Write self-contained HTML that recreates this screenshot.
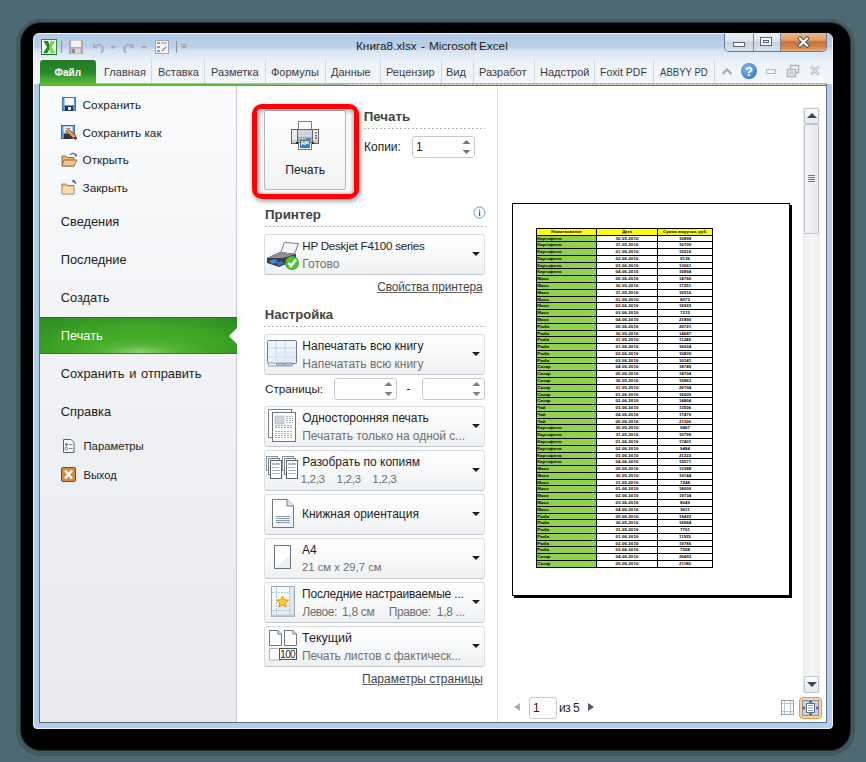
<!DOCTYPE html>
<html><head><meta charset="utf-8">
<style>
*{margin:0;padding:0;box-sizing:border-box}
html,body{width:866px;height:762px;overflow:hidden}
body{background:#4e6972;font-family:"Liberation Sans",sans-serif;position:relative;color:#222}
.a{position:absolute}
.t{position:absolute;white-space:nowrap;line-height:1}
</style></head><body>
<!-- shadow -->
<div class="a" style="left:16px;top:19px;width:839px;height:737px;border-radius:25px;background:rgba(0,0,0,.16)"></div>
<div class="a" style="left:20px;top:22px;width:831px;height:729px;border-radius:21px;background:rgba(0,0,0,.45)"></div>
<div class="a" style="left:21px;top:23px;width:829px;height:727px;border-radius:20px;background:#000"></div>
<!-- window frame -->
<div class="a" id="win" style="left:33px;top:33px;width:800px;height:696px;border-radius:6px 6px 4px 4px;background:#b3cde8;border:1px solid #e9f4ff"></div>
<!-- title bar gradient -->
<div class="a" style="left:34px;top:34px;width:798px;height:50px;border-radius:5px 5px 0 0;background:linear-gradient(#b3cbe7 0px,#b9cfe9 13px,#cddcef 15px,#d9e5f3 18px,#e4edf7 24px,#eef3fa 30px,#f4f7fb 50px)"></div>
<!-- content area border -->
<div class="a" style="left:39px;top:83px;width:788px;height:640px;background:#5e6d7d"></div>
<div class="a" style="left:39px;top:83px;width:788px;height:1px;background:#b0b4c0"></div>
<div class="a" style="left:40px;top:84px;width:786px;height:1px;background:#b8bcc2"></div>
<div class="a" style="left:350px;top:84px;width:476px;height:1px;background:repeating-linear-gradient(90deg,#eef0b8 0 2px,transparent 2px 4px)"></div>
<div class="a" style="left:40px;top:84px;width:320px;height:2px;background:linear-gradient(90deg,#58c02e 0,#58c02e 150px,rgba(88,192,46,.6) 230px,rgba(88,192,46,0) 320px)"></div>
<!-- left panel -->
<div class="a" style="left:40px;top:86px;width:196px;height:636px;background:linear-gradient(#fafbfc,#f0f1f4 50%,#e8eaed)"></div>
<div class="a" style="left:236px;top:86px;width:1px;height:636px;background:#c8ccd2"></div>
<!-- middle panel -->
<div class="a" style="left:237px;top:86px;width:260px;height:636px;background:#fff"></div>
<div class="a" style="left:497px;top:86px;width:1px;height:636px;background:#dcdfe3"></div>
<!-- preview panel -->
<div class="a" style="left:498px;top:86px;width:328px;height:636px;background:#fff"></div>

<!-- title -->
<div class="t" style="left:356px;top:40.6px;font-size:11.8px;color:#1a1a1a;word-spacing:-1.2px">Книга8.xlsx&nbsp; -&nbsp; Microsoft Excel</div>


<!-- quick access toolbar -->
<div class="a" style="left:41px;top:39px;width:16px;height:16px;border:1px solid #2a8a36;border-bottom-color:#1d6a28;background:linear-gradient(135deg,#fbfbe6,#eef6e6)"></div>
<svg class="a" style="left:41px;top:39px" width="16" height="16"><path d="M2.5 2 L7 2 L8.5 5.8 L10.2 2 L14 2 L10.4 8 L14.2 14 L9.8 14 L8.2 10.2 L6.4 14 L2.2 14 L6 8 Z" fill="#1a8a2a"/><path d="M10.2 2 L14 2 L10.4 8 L14.2 14 L9.8 14 L8.2 10.2 L8.5 5.8 Z" fill="#86d45e"/></svg>
<div class="a" style="left:61px;top:41px;width:1px;height:12px;background:#8a8f9a"></div>
<!-- save -->
<svg class="a" style="left:68px;top:39px" width="16" height="16"><rect x="1" y="1" width="14" height="14" fill="#a8a8b0"/><rect x="3" y="1.5" width="10" height="6.5" fill="#f2f3f5"/><rect x="3.5" y="9.5" width="9" height="5" fill="#d8d8dc"/><rect x="4" y="10" width="3" height="4" fill="#8a8a92"/></svg>
<!-- undo -->
<svg class="a" style="left:90px;top:39px" width="16" height="16"><path d="M3 4 L3 9 L8 9 L6.2 7.2 C8 5.8 11 6.5 11.5 9.5 C11.8 11 11 12.5 10 13.5 L12 14.5 C14 12.5 14.5 10 13.5 8 C12 4.5 8 3.8 5 5.9 Z" fill="#a9adb5"/></svg>
<div class="a" style="left:110px;top:46px;border-left:3px solid transparent;border-right:3px solid transparent;border-top:3px solid #a0a4ac;width:0;height:0"></div>
<!-- redo -->
<svg class="a" style="left:121px;top:39px" width="16" height="16"><path d="M13 4 L13 9 L8 9 L9.8 7.2 C8 5.8 5 6.5 4.5 9.5 C4.2 11 5 12.5 6 13.5 L4 14.5 C2 12.5 1.5 10 2.5 8 C4 4.5 8 3.8 11 5.9 Z" fill="#a9adb5"/></svg>
<div class="a" style="left:141px;top:46px;border-left:3px solid transparent;border-right:3px solid transparent;border-top:3px solid #a0a4ac;width:0;height:0"></div>
<!-- form icon -->
<svg class="a" style="left:154px;top:39px" width="16" height="16"><rect x="1.5" y="1.5" width="13" height="13" fill="#f4f4f6" stroke="#a4a6ae"/><rect x="3" y="3" width="3" height="2" fill="#9a9ca4"/><rect x="7" y="3" width="6" height="2" fill="#bfc1c8"/><rect x="3" y="7" width="3" height="2" fill="#9a9ca4"/><rect x="3" y="11" width="3" height="2" fill="#9a9ca4"/><path d="M8 12 L12 8" stroke="#8e9098" stroke-width="1.2"/></svg>
<div class="a" style="left:176px;top:41px;width:1px;height:12px;background:#8a8f9a"></div>
<div class="a" style="left:181px;top:44px;width:6px;height:1px;background:#a0a4ac"></div>
<div class="a" style="left:181px;top:46px;border-left:3px solid transparent;border-right:3px solid transparent;border-top:3px solid #a0a4ac;width:0;height:0"></div>

<!-- caption buttons -->
<div class="a" style="left:724px;top:33px;width:103px;height:19px;border:1px solid #6f7b89;border-top:none;border-radius:0 0 5px 5px;overflow:hidden">
 <div class="a" style="left:0;top:0;width:28px;height:18px;background:linear-gradient(#e8eff7,#dde6f0 45%,#c9d4e0 50%,#d8e2ec 100%)"></div>
 <div class="a" style="left:28px;top:0;width:1px;height:18px;background:#7c8896"></div>
 <div class="a" style="left:29px;top:0;width:26px;height:18px;background:linear-gradient(#e8eff7,#dde6f0 45%,#c9d4e0 50%,#d8e2ec 100%)"></div>
 <div class="a" style="left:55px;top:0;width:1px;height:18px;background:#7c8896"></div>
 <div class="a" style="left:56px;top:0;width:46px;height:18px;background:linear-gradient(#edb98e,#e29c66 40%,#c8703a 50%,#d0824c 75%,#e6aa7c)"></div>
</div>
<div class="a" style="left:733px;top:42px;width:12px;height:5px;background:#fff;border:1px solid #5d6470"></div>
<div class="a" style="left:760px;top:37px;width:12px;height:9px;background:#fff;border:1px solid #5d6470"></div>
<div class="a" style="left:763px;top:40px;width:6px;height:3px;border:1px solid #5d6470;background:#e8eef5"></div>
<svg class="a" style="left:797px;top:36px" width="13" height="12"><path d="M3 2.5 L10 9.5 M10 2.5 L3 9.5" stroke="#4a505c" stroke-width="4" stroke-linecap="square" fill="none"/><path d="M3 2.5 L10 9.5 M10 2.5 L3 9.5" stroke="#fff" stroke-width="2.2" stroke-linecap="square" fill="none"/></svg>

<!-- tabs -->
<div class="a" style="left:40px;top:60px;width:56px;height:24px;border-radius:3px 3px 0 0;background:linear-gradient(#237a25,#2b8a2c 55%,#48aa36 80%,#57b63c)"></div>
<div class="t" style="left:54.5px;top:68px;font-size:10px;font-weight:700;color:#fff">Файл</div>
<div class="t" style="left:104px;top:67px;font-size:11px;color:#3c3c3c">Главная</div>
<div class="a" style="left:151px;top:60px;width:1px;height:23px;background:#d4d8de"></div>
<div class="t" style="left:158px;top:67px;font-size:11px;color:#3c3c3c">Вставка</div>
<div class="a" style="left:204px;top:60px;width:1px;height:23px;background:#d4d8de"></div>
<div class="t" style="left:211px;top:67px;font-size:11px;color:#3c3c3c">Разметка</div>
<div class="a" style="left:265px;top:60px;width:1px;height:23px;background:#d4d8de"></div>
<div class="t" style="left:271px;top:67px;font-size:11px;color:#3c3c3c">Формулы</div>
<div class="a" style="left:325px;top:60px;width:1px;height:23px;background:#d4d8de"></div>
<div class="t" style="left:331px;top:67px;font-size:11px;color:#3c3c3c">Данные</div>
<div class="a" style="left:380px;top:60px;width:1px;height:23px;background:#d4d8de"></div>
<div class="t" style="left:386px;top:67px;font-size:11px;color:#3c3c3c;width:49px;overflow:hidden">Рецензирование</div>
<div class="a" style="left:441px;top:60px;width:1px;height:23px;background:#d4d8de"></div>
<div class="t" style="left:446px;top:67px;font-size:11px;color:#3c3c3c">Вид</div>
<div class="a" style="left:473px;top:60px;width:1px;height:23px;background:#d4d8de"></div>
<div class="t" style="left:479px;top:67px;font-size:11px;color:#3c3c3c;width:48px;overflow:hidden">Разработчик</div>
<div class="a" style="left:534px;top:60px;width:1px;height:23px;background:#d4d8de"></div>
<div class="t" style="left:540px;top:67px;font-size:11px;color:#3c3c3c;width:49px;overflow:hidden">Надстройки</div>
<div class="a" style="left:594px;top:60px;width:1px;height:23px;background:#d4d8de"></div>
<div class="t" style="left:600px;top:67px;font-size:11px;color:#3c3c3c;transform:scaleX(.96);transform-origin:0 0">Foxit PDF</div>
<div class="a" style="left:653px;top:60px;width:1px;height:23px;background:#d4d8de"></div>
<div class="t" style="left:660px;top:67px;font-size:11px;color:#3c3c3c;transform:scaleX(.87);transform-origin:0 0">ABBYY PD</div>
<div class="a" style="left:714px;top:60px;width:1px;height:23px;background:#d4d8de"></div>
<!-- ribbon right icons -->
<svg class="a" style="left:721px;top:67px" width="12" height="9"><path d="M1.5 7 L6 2.5 L10.5 7" stroke="#a4a8b0" stroke-width="2" fill="none"/></svg>
<div class="a" style="left:741px;top:63px;width:16px;height:16px;border-radius:50%;background:radial-gradient(circle at 40% 35%,#8fb9ec,#3f7fd0 70%,#2f66b8)"></div>
<div class="t" style="left:745px;top:65px;font-size:13px;font-weight:700;color:#fff">?</div>
<div class="a" style="left:766px;top:69px;width:10px;height:5px;border:1.5px solid #b0b4bc;border-radius:1px"></div>
<svg class="a" style="left:786px;top:64px" width="14" height="14"><rect x="4.5" y="1.5" width="8" height="7" fill="none" stroke="#b0b4bc" stroke-width="1.5"/><rect x="1.5" y="5.5" width="8" height="7" fill="#f4f7fb" stroke="#b0b4bc" stroke-width="1.5"/><rect x="4" y="8" width="3" height="2" fill="none" stroke="#b0b4bc"/></svg>
<svg class="a" style="left:809px;top:65px" width="12" height="11"><path d="M2 1.5 L6 5 L10 1.5 M2 9.5 L6 6 L10 9.5" stroke="#b0b4bc" stroke-width="2.6" fill="none"/><path d="M2 1.5 L6 5 L10 1.5 M2 9.5 L6 6 L10 9.5" stroke="#f4f7fb" stroke-width="1" fill="none"/></svg>

<div class="t" style="left:82.50px;top:99.71px;font-size:11.8px;font-weight:400;color:#222;">Сохранить</div>
<div class="t" style="left:82.50px;top:127.71px;font-size:11.8px;font-weight:400;color:#222;">Сохранить как</div>
<div class="t" style="left:82.50px;top:155.21px;font-size:11.8px;font-weight:400;color:#222;">Открыть</div>
<div class="t" style="left:82.50px;top:183.21px;font-size:11.8px;font-weight:400;color:#222;">Закрыть</div>
<div class="t" style="left:60.80px;top:216.16px;font-size:12.8px;font-weight:400;color:#222;">Сведения</div>
<div class="t" style="left:60.80px;top:254.06px;font-size:12.8px;font-weight:400;color:#222;">Последние</div>
<div class="t" style="left:60.80px;top:292.36px;font-size:12.8px;font-weight:400;color:#222;">Создать</div>
<div class="a" style="left:40px;top:317px;width:197px;height:37px;background:radial-gradient(ellipse 70px 14px at 100px 35px,rgba(170,225,140,.75) 0%,rgba(120,200,90,.35) 50%,rgba(80,180,50,0) 100%),radial-gradient(ellipse 140px 40px at 100px 30px,#4cb22e 0%,#3fa526 55%,#2b8c22 100%);border-top:1px solid #217a1f;border-bottom:1px solid #2a8424"></div>
<svg class="a" style="left:229px;top:328px" width="8" height="16"><path d="M8 0 L0 8 L8 16 Z" fill="#fff"/></svg>
<div class="t" style="left:60.80px;top:330.06px;font-size:12.8px;font-weight:400;color:#fff;">Печать</div>
<div class="t" style="left:60.80px;top:368.36px;font-size:12.8px;font-weight:400;color:#222;word-spacing:1.2px">Сохранить и отправить</div>
<div class="t" style="left:60.80px;top:405.86px;font-size:12.8px;font-weight:400;color:#222;">Справка</div>
<div class="t" style="left:83.50px;top:441.43px;font-size:11.3px;font-weight:400;color:#222;">Параметры</div>
<div class="t" style="left:83.50px;top:469.60px;font-size:11.1px;font-weight:400;color:#222;">Выход</div>
<svg class="a" style="left:61px;top:96px" width="16" height="16">
<rect x="1" y="1" width="14" height="14" rx="1" fill="#5a9be6"/><rect x="1.5" y="1.5" width="13" height="13" fill="none" stroke="#3d6fb8"/>
<rect x="3.5" y="2" width="9.5" height="7" fill="#f6f8fb"/><rect x="4" y="10" width="8" height="5" fill="#2c3448"/><rect x="7" y="11" width="3" height="3" fill="#e8ecf2"/></svg>
<svg class="a" style="left:60px;top:124px" width="18" height="16">
<rect x="1" y="1" width="14" height="14" rx="1" fill="#5a9be6"/><rect x="1.5" y="1.5" width="13" height="13" fill="none" stroke="#3d6fb8"/>
<rect x="3.5" y="2.5" width="9" height="6" fill="#f6f8fb"/><rect x="4" y="10" width="8" height="5" fill="#2c3448"/><path d="M5 4.5 H11 M5 6.5 H9" stroke="#8a94a4" stroke-width=".8"/>
<path d="M7 6 L15 13.5" stroke="#6b3a14" stroke-width="4"/><path d="M7 6 L15 13.5" stroke="#f0a24a" stroke-width="2.6"/><circle cx="15.5" cy="14" r="1.6" fill="#8a2020"/></svg>
<svg class="a" style="left:61px;top:152px" width="17" height="16">
<path d="M1 4 L5 4 L6.5 5.5 L13 5.5 L13 14 L1 14 Z" fill="#e7b47a" stroke="#7a5a3a" stroke-width="0.8"/>
<path d="M3 8 L16 8 L13 14 L1 14 Z" fill="#f2c48c" stroke="#7a5a3a" stroke-width="0.8"/>
<path d="M9 3 C11 0.5 14 1 15 3.5" stroke="#4a5a7a" stroke-width="1.1" fill="none"/><path d="M13.5 4 L16 4.5 L15.5 1.8 Z" fill="#2a5ab0"/></svg>
<svg class="a" style="left:61px;top:179px" width="17" height="16">
<path d="M1 5 L5 5 L6.5 6.5 L13 6.5 L13 15 L1 15 Z" fill="#f0c88e" stroke="#7a5a3a" stroke-width="0.8"/>
<path d="M1.5 8 L12.5 8 L12.5 14.5 L1.5 14.5 Z" fill="#f6dba8"/>
<path d="M12 1.5 L15 4.5" stroke="#4a5060" stroke-width="1.2"/><path d="M11.5 1 L14 1 L11.5 3.5 Z" fill="#2a4ea0"/></svg>
<svg class="a" style="left:62px;top:438px" width="14" height="16">
<path d="M1.5 1.5 L9 1.5 L12 4.5 L12 14.5 L1.5 14.5 Z" fill="#fbfbfc" stroke="#5a6070"/>
<circle cx="4.5" cy="6.5" r="1.3" fill="#58607a"/><circle cx="4.5" cy="10.5" r="1.3" fill="none" stroke="#58607a" stroke-width="0.8"/>
<rect x="7" y="6" width="3.5" height="1" fill="#7a8499"/><rect x="7" y="10" width="3.5" height="1" fill="#7a8499"/></svg>
<svg class="a" style="left:61px;top:467px" width="15" height="15">
<rect x="0.5" y="0.5" width="14" height="14" rx="1.5" fill="#d78a3a" stroke="#6a4a40"/>
<path d="M4 3.5 L11 11.5 M11 3.5 L4 11.5" stroke="#fff" stroke-width="2.6"/></svg>
<div class="a" style="left:252px;top:104px;width:107px;height:95px;border:5px solid #ff0000;border-radius:10px;background:#fff;box-shadow:1px 2px 4px 1px rgba(70,90,100,.45)"></div>
<div class="a" style="left:257px;top:109px;width:97px;height:85px;border-radius:4px;background:#fafafa;box-shadow:inset 2px 2px 4px rgba(90,100,105,.5),inset -2px -1px 3px rgba(90,100,105,.3)"></div>
<div class="a" style="left:264px;top:110px;width:82px;height:80px;border:1px solid #b4b8bd;border-top-color:#9a9ca8;border-radius:3px;background:linear-gradient(#fdfdfd,#f8f8f9 60%,#f1f2f3)"></div>
<svg class="a" style="left:289px;top:119px" width="32" height="32">
<rect x="9.5" y="2.5" width="13" height="8" fill="#fff" stroke="#7a8084"/>
<rect x="2.5" y="10.5" width="27" height="14" fill="#eceef0" stroke="#6a6070"/>
<rect x="8.5" y="10.5" width="15" height="14" fill="#cfd0d4" stroke="#6a6070"/>
<path d="M10 13.5 H22 M10 16.5 H22" stroke="#e6e7ea" stroke-dasharray="1 1"/>
<rect x="9" y="18" width="14" height="5" fill="#aab2ae"/><rect x="17" y="19" width="5" height="2" fill="#4a8ad8"/>
<rect x="3" y="21" width="5" height="3" fill="#c8cacc"/><rect x="24" y="21" width="5" height="3" fill="#c8cacc"/>
<rect x="7" y="23" width="2" height="2" fill="#2a2a30"/><rect x="23" y="23" width="2" height="2" fill="#2a2a30"/>
<rect x="9.5" y="23.5" width="13" height="7" fill="#fff" stroke="#6f7478"/>
<rect x="11.5" y="21.5" width="9" height="7" fill="#b4e2f6" stroke="#5a6a7a"/><path d="M12 27 L14 25 L16 26.5 L18 24.5 L20 26 L20 28 L12 28 Z" fill="#3a7ad0"/><rect x="14" y="22" width="2" height="1.5" fill="#f0a020"/>
<rect x="26" y="13" width="2" height="1.5" fill="#6a707a"/><rect x="26" y="16" width="2" height="1.5" fill="#6a707a"/><rect x="26" y="18.5" width="2" height="1.5" fill="#7a5060"/></svg>
<div class="t" style="left:285.30px;top:163.97px;font-size:12.2px;font-weight:400;color:#222;">Печать</div>
<div class="t" style="left:363.70px;top:109.54px;font-size:13.3px;font-weight:700;color:#444;">Печать</div>
<div class="a" style="left:364px;top:128px;width:121px;height:1px;background:repeating-linear-gradient(90deg,#b4b4b4 0 2px,transparent 2px 4px)"></div>
<div class="t" style="left:364.00px;top:140.64px;font-size:12px;font-weight:400;color:#222;">Копии:</div>
<div class="a" style="left:412px;top:136px;width:63px;height:22px;border:1px solid #c6cacf;border-radius:3px;background:#fff"></div>
<div class="t" style="left:416.00px;top:140.64px;font-size:12px;font-weight:400;color:#222;">1</div>
<svg class="a" style="left:462px;top:139px" width="9" height="16"><path d="M0.5 5 L4.5 1 L8.5 5 Z M0.5 11 L4.5 15 L8.5 11 Z" fill="#707480"/></svg>
<div class="t" style="left:265.00px;top:207.94px;font-size:13.3px;font-weight:700;color:#444;">Принтер</div>
<div class="a" style="left:265px;top:226px;width:221px;height:1px;background:repeating-linear-gradient(90deg,#b4b4b4 0 2px,transparent 2px 4px)"></div>
<svg class="a" style="left:473px;top:206px" width="13" height="13"><circle cx="6.5" cy="6.5" r="5.5" fill="#fff" stroke="#5b9be0" stroke-width="1"/><rect x="6" y="3.5" width="1.2" height="1.2" fill="#50505a"/><rect x="6" y="5.5" width="1.2" height="4.5" fill="#50505a"/></svg>
<div class="a" style="left:264px;top:234px;width:221px;height:41px;border:1px solid #dadde1;border-bottom-color:#c4c8cd;border-radius:3px;background:linear-gradient(#fefefe,#f7f8f9 55%,#eff0f2)"></div>
<div class="a" style="left:472px;top:252px;border-left:4px solid transparent;border-right:4px solid transparent;border-top:4px solid #202020;width:0;height:0"></div>
<svg class="a" style="left:266px;top:241px" width="34" height="30">
<path d="M18.5 1.5 L32.5 2.5 L28.5 13 L14.5 12 Z" fill="#f2f3f4" stroke="#7a7e86" stroke-width="1"/>
<path d="M1 17 L14 11 L30 13 L30 19 L13 26 L1 22 Z" fill="#3c3e44"/>
<path d="M1 17 L14 11 L30 13 L17 17 Z" fill="#8a8e96"/>
<path d="M3 20 L9 18 L12 21 L6 23 Z" fill="#3a8ae0"/><path d="M10 22 L16 20 L18 23 L12 25 Z" fill="#2a72d0"/>
<circle cx="26" cy="22" r="7" fill="#3fae2a"/><circle cx="26" cy="22" r="6" fill="#52c236"/>
<path d="M22.5 22 L25 25 L30 18.5" stroke="#fff" stroke-width="2.4" fill="none"/></svg>
<div class="t" style="left:302.30px;top:240.38px;font-size:11.6px;font-weight:400;color:#1e1e1e;letter-spacing:-0.25px">HP Deskjet F4100 series</div>
<div class="t" style="left:302.30px;top:258.04px;font-size:12px;font-weight:400;color:#707070;">Готово</div>
<div class="t" style="left:377.20px;top:281.14px;font-size:12px;font-weight:400;color:#444;text-decoration:underline;text-decoration-color:#666;letter-spacing:-0.15px">Свойства принтера</div>
<div class="t" style="left:264.80px;top:307.61px;font-size:13.1px;font-weight:700;color:#444;">Настройка</div>
<div class="a" style="left:264px;top:326px;width:221px;height:1px;background:repeating-linear-gradient(90deg,#b4b4b4 0 2px,transparent 2px 4px)"></div>
<div class="a" style="left:264px;top:334px;width:221px;height:41px;border:1px solid #dadde1;border-bottom-color:#c4c8cd;border-radius:3px;background:linear-gradient(#fefefe,#f7f8f9 55%,#eff0f2)"></div>
<div class="a" style="left:472px;top:352px;border-left:4px solid transparent;border-right:4px solid transparent;border-top:4px solid #202020;width:0;height:0"></div>
<svg class="a" style="left:266px;top:339px" width="32" height="28">
<rect x="1.5" y="1.5" width="29" height="23" rx="1" fill="#eef4fb" stroke="#6f7a84"/>
<path d="M10 2 V24 M19 2 V24 M2 9 H30 M2 18 H30" stroke="#c8d6e6" stroke-width="1"/>
<path d="M2 24 L14 12 L30 12 L30 24 Z" fill="#dbe8f6" opacity=".6"/>
<rect x="2.5" y="24" width="8" height="3" rx="1" fill="#fff" stroke="#7a8490" stroke-width=".8"/>
<rect x="10.5" y="24" width="8" height="3" rx="1" fill="#a8c4e4" stroke="#7a8490" stroke-width=".8"/>
<rect x="18.5" y="24" width="8" height="3" rx="1" fill="#a8c4e4" stroke="#7a8490" stroke-width=".8"/></svg>
<div class="t" style="left:302.30px;top:339.84px;font-size:12px;font-weight:400;color:#1e1e1e;">Напечатать всю книгу</div>
<div class="t" style="left:302.30px;top:357.84px;font-size:12px;font-weight:400;color:#707070;">Напечатать всю книгу</div>
<div class="t" style="left:265.00px;top:382.90px;font-size:11.7px;font-weight:400;color:#222;">Страницы:</div>
<div class="a" style="left:334px;top:378px;width:63px;height:22px;border:1px solid #c6cacf;border-radius:3px;background:#fff"></div>
<svg class="a" style="left:384px;top:381px" width="9" height="16"><path d="M0.5 5 L4.5 1 L8.5 5 Z M0.5 11 L4.5 15 L8.5 11 Z" fill="#7e7c8a"/></svg>
<div class="t" style="left:406.50px;top:382.64px;font-size:12px;font-weight:400;color:#222;">-</div>
<div class="a" style="left:422px;top:378px;width:63px;height:22px;border:1px solid #c6cacf;border-radius:3px;background:#fff"></div>
<svg class="a" style="left:472px;top:381px" width="9" height="16"><path d="M0.5 5 L4.5 1 L8.5 5 Z M0.5 11 L4.5 15 L8.5 11 Z" fill="#7e7c8a"/></svg>
<div class="a" style="left:264px;top:406px;width:221px;height:41px;border:1px solid #dadde1;border-bottom-color:#c4c8cd;border-radius:3px;background:linear-gradient(#fefefe,#f7f8f9 55%,#eff0f2)"></div>
<div class="a" style="left:472px;top:424px;border-left:4px solid transparent;border-right:4px solid transparent;border-top:4px solid #202020;width:0;height:0"></div>
<svg class="a" style="left:267px;top:409px" width="30" height="34">
<rect x="1.5" y="0.5" width="23" height="28" fill="#fff" stroke="#7a8488"/>
<rect x="5.5" y="3.5" width="23" height="29" fill="#fff" stroke="#6a747c"/>
<rect x="8" y="7" width="9" height="8" fill="#d0d4d8" stroke="#a8aeb4" stroke-width=".6"/>
<path d="M19 7.5 H26 M19 9.5 H26 M19 11.5 H26 M19 13.5 H26 M8 16.5 H26 M8 18.5 H26 M8 22.5 H26 M8 24.5 H26 M8 26.5 H26 M8 28.5 H26" stroke="#a4b0bc" stroke-width="1" stroke-dasharray="2 1"/></svg>
<div class="t" style="left:302.30px;top:411.84px;font-size:12px;font-weight:400;color:#1e1e1e;letter-spacing:-0.05px">Односторонняя печать</div>
<div class="t" style="left:302.30px;top:429.84px;font-size:12px;font-weight:400;color:#707070;letter-spacing:-0.05px">Печатать только на одной с...</div>
<div class="a" style="left:264px;top:450px;width:221px;height:41px;border:1px solid #dadde1;border-bottom-color:#c4c8cd;border-radius:3px;background:linear-gradient(#fefefe,#f7f8f9 55%,#eff0f2)"></div>
<div class="a" style="left:472px;top:468px;border-left:4px solid transparent;border-right:4px solid transparent;border-top:4px solid #202020;width:0;height:0"></div>
<svg class="a" style="left:266px;top:456px" width="34" height="24">
<g><rect x="0.5" y="0.5" width="11" height="14" fill="#fff" stroke="#8a9498"/>
<rect x="2.5" y="2.5" width="11" height="16" fill="#fff" stroke="#7a8488"/>
<rect x="4.5" y="4.5" width="11" height="18" fill="#fff" stroke="#5a646c"/>
<rect x="6" y="7" width="8" height="2" fill="#b4bcc4"/><path d="M6 11.5 H13 M6 14.5 H14 M6 17.5 H14" stroke="#a8b0b8"/></g><g transform="translate(16 0)"><rect x="0.5" y="0.5" width="11" height="14" fill="#fff" stroke="#8a9498"/>
<rect x="2.5" y="2.5" width="11" height="16" fill="#fff" stroke="#7a8488"/>
<rect x="4.5" y="4.5" width="11" height="18" fill="#fff" stroke="#5a646c"/>
<rect x="6" y="7" width="8" height="2" fill="#b4bcc4"/><path d="M6 11.5 H13 M6 14.5 H14 M6 17.5 H14" stroke="#a8b0b8"/></g></svg>
<div class="t" style="left:302.30px;top:455.84px;font-size:12px;font-weight:400;color:#1e1e1e;">Разобрать по копиям</div>
<div class="t" style="left:300.50px;top:474.01px;font-size:11.8px;font-weight:400;color:#707070;letter-spacing:-0.4px">1,2,3</div>
<div class="t" style="left:336.50px;top:474.01px;font-size:11.8px;font-weight:400;color:#707070;letter-spacing:-0.4px">1,2,3</div>
<div class="t" style="left:372.30px;top:474.01px;font-size:11.8px;font-weight:400;color:#707070;letter-spacing:-0.4px">1,2,3</div>
<div class="a" style="left:264px;top:494px;width:221px;height:41px;border:1px solid #dadde1;border-bottom-color:#c4c8cd;border-radius:3px;background:linear-gradient(#fefefe,#f7f8f9 55%,#eff0f2)"></div>
<div class="a" style="left:472px;top:512px;border-left:4px solid transparent;border-right:4px solid transparent;border-top:4px solid #202020;width:0;height:0"></div>
<svg class="a" style="left:272px;top:499px" width="23" height="30">
<path d="M0.5 0.5 L15 0.5 L21.5 7 L21.5 28.5 L0.5 28.5 Z" fill="#fff" stroke="#6f7880"/>
<path d="M15 0.5 L15 7 L21.5 7" fill="#dfe8f4" stroke="#6f7880"/>
<path d="M1 28 L21 10 L21 28 Z" fill="#e8f1fa" opacity=".7"/>
<path d="M4 17.5 H18 M4 19.5 H18 M4 21.5 H18 M4 23.5 H18" stroke="#8a98a8" stroke-width="1"/></svg>
<div class="t" style="left:302.00px;top:508.34px;font-size:12px;font-weight:400;color:#1e1e1e;">Книжная ориентация</div>
<div class="a" style="left:264px;top:538px;width:221px;height:41px;border:1px solid #dadde1;border-bottom-color:#c4c8cd;border-radius:3px;background:linear-gradient(#fefefe,#f7f8f9 55%,#eff0f2)"></div>
<div class="a" style="left:472px;top:556px;border-left:4px solid transparent;border-right:4px solid transparent;border-top:4px solid #202020;width:0;height:0"></div>
<svg class="a" style="left:273px;top:544px" width="19" height="26">
<rect x="1.5" y="1.5" width="16" height="23" fill="#fff" stroke="#6f7880"/>
<path d="M2 24 L17 11 L17 24 Z" fill="#e6eff9"/></svg>
<div class="t" style="left:302.00px;top:543.84px;font-size:12px;font-weight:400;color:#1e1e1e;">A4</div>
<div class="t" style="left:302.00px;top:562.43px;font-size:11.3px;font-weight:400;color:#707070;">21 см x 29,7 см</div>
<div class="a" style="left:264px;top:582px;width:221px;height:41px;border:1px solid #dadde1;border-bottom-color:#c4c8cd;border-radius:3px;background:linear-gradient(#fefefe,#f7f8f9 55%,#eff0f2)"></div>
<div class="a" style="left:472px;top:600px;border-left:4px solid transparent;border-right:4px solid transparent;border-top:4px solid #202020;width:0;height:0"></div>
<svg class="a" style="left:270px;top:586px" width="26" height="32">
<rect x="1.5" y="0.5" width="23" height="30" fill="#f8fbfe" stroke="#9aa6b0"/>
<path d="M2 25 L24 8 L24 30 L2 30 Z" fill="#e4eef8"/>
<path d="M6.5 1 V30 M19.5 1 V30 M2 6.5 H24 M2 24.5 H24" stroke="#b4c6dc" stroke-width="1" stroke-dasharray="2 1"/><rect x="20" y="1" width="4" height="29" fill="#dde2e8" opacity=".7"/>
<rect x="1.5" y="28.5" width="23" height="2" fill="#c8ccd0"/>
<path d="M12.5 10 L14.3 13.8 L18.5 14.2 L15.3 16.9 L16.3 21 L12.5 18.8 L8.7 21 L9.7 16.9 L6.5 14.2 L10.7 13.8 Z" fill="#ffd21a" stroke="#e08a2a" stroke-width="1"/></svg>
<div class="t" style="left:302.00px;top:587.84px;font-size:12px;font-weight:400;color:#1e1e1e;letter-spacing:-0.17px">Последние настраиваемые ...</div>
<div class="t" style="left:302.30px;top:605.84px;font-size:12px;font-weight:400;color:#707070;letter-spacing:-0.5px">Левое:</div>
<div class="t" style="left:342.00px;top:605.84px;font-size:12px;font-weight:400;color:#707070;letter-spacing:-0.3px">1,8 см</div>
<div class="t" style="left:388.80px;top:605.84px;font-size:12px;font-weight:400;color:#707070;letter-spacing:-0.45px">Правое:</div>
<div class="t" style="left:436.80px;top:605.84px;font-size:12px;font-weight:400;color:#707070;letter-spacing:-0.3px">1,8 ...</div>
<div class="a" style="left:264px;top:626px;width:221px;height:41px;border:1px solid #dadde1;border-bottom-color:#c4c8cd;border-radius:3px;background:linear-gradient(#fefefe,#f7f8f9 55%,#eff0f2)"></div>
<div class="a" style="left:472px;top:644px;border-left:4px solid transparent;border-right:4px solid transparent;border-top:4px solid #202020;width:0;height:0"></div>
<svg class="a" style="left:268px;top:629px" width="31" height="32">
<path d="M1.5 1.5 L10 1.5 L13.5 5 L13.5 16.5 L1.5 16.5 Z" fill="#fff" stroke="#6f7880"/><path d="M10 1.5 V5 H13.5" fill="#e4ecf4" stroke="#6f7880"/>
<path d="M16.5 1.5 L25 1.5 L28.5 5 L28.5 16.5 L16.5 16.5 Z" fill="#fff" stroke="#6f7880"/><path d="M25 1.5 V5 H28.5" fill="#e4ecf4" stroke="#6f7880"/>
<path d="M1.5 19.5 L10 19.5 L13.5 23 L13.5 31 L1.5 31 Z" fill="#fff" stroke="#aab0b6"/>
<rect x="11.5" y="19.5" width="17" height="11" fill="#fff" stroke="#4a545c"/></svg>
<div class="t" style="left:280.30px;top:650.13px;font-size:10px;font-weight:400;color:#222;letter-spacing:-0.7px">100</div>
<div class="t" style="left:302.00px;top:631.82px;font-size:12.5px;font-weight:400;color:#1e1e1e;">Текущий</div>
<div class="t" style="left:302.00px;top:649.84px;font-size:12px;font-weight:400;color:#707070;letter-spacing:-0.1px">Печать листов с фактическ...</div>
<div class="t" style="left:362.00px;top:672.84px;font-size:12px;font-weight:400;color:#444;text-decoration:underline;text-decoration-color:#666">Параметры страницы</div>
<div class="a" style="left:803px;top:107px;width:17px;height:586px;background:linear-gradient(90deg,#eceef1,#f6f7f8 50%,#eceef1);border-left:1px solid #e6e8eb"></div>
<div class="a" style="left:804px;top:108px;width:15px;height:16px;border:1px solid #c2c6cc;border-radius:2px;background:linear-gradient(#fbfbfc,#e6e8eb)"></div>
<div class="a" style="left:807px;top:113px;border-left:5px solid transparent;border-right:5px solid transparent;border-bottom:5px solid #3c4a60;width:0;height:0"></div>
<div class="a" style="left:804px;top:124px;width:15px;height:110px;border:1px solid #c2c6cc;border-radius:2px;background:linear-gradient(90deg,#f5f6f8,#e6e8ec)"></div>
<div class="a" style="left:808px;top:175px;width:7px;height:1px;background:#707a88"></div>
<div class="a" style="left:808px;top:177px;width:7px;height:1px;background:#707a88"></div>
<div class="a" style="left:808px;top:179px;width:7px;height:1px;background:#707a88"></div>
<div class="a" style="left:808px;top:181px;width:7px;height:1px;background:#707a88"></div>
<div class="a" style="left:804px;top:676px;width:15px;height:17px;border:1px solid #c2c6cc;border-radius:2px;background:linear-gradient(#fbfbfc,#e6e8eb)"></div>
<div class="a" style="left:807px;top:682px;border-left:5px solid transparent;border-right:5px solid transparent;border-top:5px solid #3c4a60;width:0;height:0"></div>
<div class="a" style="left:514px;top:205px;width:278px;height:393px;background:#000"></div>
<div class="a" style="left:512px;top:203px;width:278px;height:393px;background:#fff;border:1px solid #000"></div>
<div class="a" style="left:536px;top:228px;width:177px;height:340px;background:#000"></div>
<div class="a" style="left:537px;top:229px;width:59px;height:6px;background:#ffff00"></div>
<div class="a" style="left:597px;top:229px;width:60px;height:6px;background:#ffff00"></div>
<div class="a" style="left:658px;top:229px;width:54px;height:6px;background:#ffff00"></div>
<div class="t" style="left:537px;top:229.8px;width:59px;text-align:center;font-size:4.2px;font-weight:700;color:#000">Наименование</div>
<div class="t" style="left:597px;top:229.8px;width:60px;text-align:center;font-size:4.2px;font-weight:700;color:#000">Дата</div>
<div class="t" style="left:658px;top:229.8px;width:54px;text-align:center;font-size:4.2px;font-weight:700;color:#000">Сумма выручки, руб.</div>
<div class="a" style="left:537px;top:236px;width:59px;height:5px;background:#92d050"></div>
<div class="a" style="left:597px;top:236px;width:60px;height:5px;background:#fff"></div>
<div class="a" style="left:658px;top:236px;width:54px;height:5px;background:#fff"></div>
<div class="t" style="left:537.3px;top:237.1px;font-size:4.4px;font-weight:700;color:#000">Картофель</div>
<div class="t" style="left:597px;top:237.1px;width:60px;text-align:center;font-size:4.4px;font-weight:700;color:#000;letter-spacing:.1px">30.05.2010</div>
<div class="t" style="left:658px;top:237.1px;width:54px;text-align:center;font-size:4.4px;font-weight:700;color:#000">10898</div>
<div class="a" style="left:537px;top:242px;width:59px;height:6px;background:#92d050"></div>
<div class="a" style="left:597px;top:242px;width:60px;height:6px;background:#fff"></div>
<div class="a" style="left:658px;top:242px;width:54px;height:6px;background:#fff"></div>
<div class="t" style="left:537.3px;top:243.1px;font-size:4.4px;font-weight:700;color:#000">Картофель</div>
<div class="t" style="left:597px;top:243.1px;width:60px;text-align:center;font-size:4.4px;font-weight:700;color:#000;letter-spacing:.1px">31.05.2010</div>
<div class="t" style="left:658px;top:243.1px;width:54px;text-align:center;font-size:4.4px;font-weight:700;color:#000">16709</div>
<div class="a" style="left:537px;top:249px;width:59px;height:6px;background:#92d050"></div>
<div class="a" style="left:597px;top:249px;width:60px;height:6px;background:#fff"></div>
<div class="a" style="left:658px;top:249px;width:54px;height:6px;background:#fff"></div>
<div class="t" style="left:537.3px;top:250.1px;font-size:4.4px;font-weight:700;color:#000">Картофель</div>
<div class="t" style="left:597px;top:250.1px;width:60px;text-align:center;font-size:4.4px;font-weight:700;color:#000;letter-spacing:.1px">01.06.2010</div>
<div class="t" style="left:658px;top:250.1px;width:54px;text-align:center;font-size:4.4px;font-weight:700;color:#000">15916</div>
<div class="a" style="left:537px;top:256px;width:59px;height:6px;background:#92d050"></div>
<div class="a" style="left:597px;top:256px;width:60px;height:6px;background:#fff"></div>
<div class="a" style="left:658px;top:256px;width:54px;height:6px;background:#fff"></div>
<div class="t" style="left:537.3px;top:257.1px;font-size:4.4px;font-weight:700;color:#000">Картофель</div>
<div class="t" style="left:597px;top:257.1px;width:60px;text-align:center;font-size:4.4px;font-weight:700;color:#000;letter-spacing:.1px">02.06.2010</div>
<div class="t" style="left:658px;top:257.1px;width:54px;text-align:center;font-size:4.4px;font-weight:700;color:#000">9136</div>
<div class="a" style="left:537px;top:263px;width:59px;height:5px;background:#92d050"></div>
<div class="a" style="left:597px;top:263px;width:60px;height:5px;background:#fff"></div>
<div class="a" style="left:658px;top:263px;width:54px;height:5px;background:#fff"></div>
<div class="t" style="left:537.3px;top:264.1px;font-size:4.4px;font-weight:700;color:#000">Картофель</div>
<div class="t" style="left:597px;top:264.1px;width:60px;text-align:center;font-size:4.4px;font-weight:700;color:#000;letter-spacing:.1px">03.06.2010</div>
<div class="t" style="left:658px;top:264.1px;width:54px;text-align:center;font-size:4.4px;font-weight:700;color:#000">13061</div>
<div class="a" style="left:537px;top:269px;width:59px;height:6px;background:#92d050"></div>
<div class="a" style="left:597px;top:269px;width:60px;height:6px;background:#fff"></div>
<div class="a" style="left:658px;top:269px;width:54px;height:6px;background:#fff"></div>
<div class="t" style="left:537.3px;top:270.1px;font-size:4.4px;font-weight:700;color:#000">Картофель</div>
<div class="t" style="left:597px;top:270.1px;width:60px;text-align:center;font-size:4.4px;font-weight:700;color:#000;letter-spacing:.1px">04.06.2010</div>
<div class="t" style="left:658px;top:270.1px;width:54px;text-align:center;font-size:4.4px;font-weight:700;color:#000">16894</div>
<div class="a" style="left:537px;top:276px;width:59px;height:6px;background:#92d050"></div>
<div class="a" style="left:597px;top:276px;width:60px;height:6px;background:#fff"></div>
<div class="a" style="left:658px;top:276px;width:54px;height:6px;background:#fff"></div>
<div class="t" style="left:537.3px;top:277.1px;font-size:4.4px;font-weight:700;color:#000">Мясо</div>
<div class="t" style="left:597px;top:277.1px;width:60px;text-align:center;font-size:4.4px;font-weight:700;color:#000;letter-spacing:.1px">05.06.2010</div>
<div class="t" style="left:658px;top:277.1px;width:54px;text-align:center;font-size:4.4px;font-weight:700;color:#000">14766</div>
<div class="a" style="left:537px;top:283px;width:59px;height:6px;background:#92d050"></div>
<div class="a" style="left:597px;top:283px;width:60px;height:6px;background:#fff"></div>
<div class="a" style="left:658px;top:283px;width:54px;height:6px;background:#fff"></div>
<div class="t" style="left:537.3px;top:284.1px;font-size:4.4px;font-weight:700;color:#000">Мясо</div>
<div class="t" style="left:597px;top:284.1px;width:60px;text-align:center;font-size:4.4px;font-weight:700;color:#000;letter-spacing:.1px">30.05.2010</div>
<div class="t" style="left:658px;top:284.1px;width:54px;text-align:center;font-size:4.4px;font-weight:700;color:#000">17251</div>
<div class="a" style="left:537px;top:290px;width:59px;height:6px;background:#92d050"></div>
<div class="a" style="left:597px;top:290px;width:60px;height:6px;background:#fff"></div>
<div class="a" style="left:658px;top:290px;width:54px;height:6px;background:#fff"></div>
<div class="t" style="left:537.3px;top:291.1px;font-size:4.4px;font-weight:700;color:#000">Мясо</div>
<div class="t" style="left:597px;top:291.1px;width:60px;text-align:center;font-size:4.4px;font-weight:700;color:#000;letter-spacing:.1px">31.05.2010</div>
<div class="t" style="left:658px;top:291.1px;width:54px;text-align:center;font-size:4.4px;font-weight:700;color:#000">16516</div>
<div class="a" style="left:537px;top:297px;width:59px;height:5px;background:#92d050"></div>
<div class="a" style="left:597px;top:297px;width:60px;height:5px;background:#fff"></div>
<div class="a" style="left:658px;top:297px;width:54px;height:5px;background:#fff"></div>
<div class="t" style="left:537.3px;top:298.1px;font-size:4.4px;font-weight:700;color:#000">Мясо</div>
<div class="t" style="left:597px;top:298.1px;width:60px;text-align:center;font-size:4.4px;font-weight:700;color:#000;letter-spacing:.1px">01.06.2010</div>
<div class="t" style="left:658px;top:298.1px;width:54px;text-align:center;font-size:4.4px;font-weight:700;color:#000">8073</div>
<div class="a" style="left:537px;top:303px;width:59px;height:6px;background:#92d050"></div>
<div class="a" style="left:597px;top:303px;width:60px;height:6px;background:#fff"></div>
<div class="a" style="left:658px;top:303px;width:54px;height:6px;background:#fff"></div>
<div class="t" style="left:537.3px;top:304.1px;font-size:4.4px;font-weight:700;color:#000">Мясо</div>
<div class="t" style="left:597px;top:304.1px;width:60px;text-align:center;font-size:4.4px;font-weight:700;color:#000;letter-spacing:.1px">02.06.2010</div>
<div class="t" style="left:658px;top:304.1px;width:54px;text-align:center;font-size:4.4px;font-weight:700;color:#000">16922</div>
<div class="a" style="left:537px;top:310px;width:59px;height:6px;background:#92d050"></div>
<div class="a" style="left:597px;top:310px;width:60px;height:6px;background:#fff"></div>
<div class="a" style="left:658px;top:310px;width:54px;height:6px;background:#fff"></div>
<div class="t" style="left:537.3px;top:311.1px;font-size:4.4px;font-weight:700;color:#000">Мясо</div>
<div class="t" style="left:597px;top:311.1px;width:60px;text-align:center;font-size:4.4px;font-weight:700;color:#000;letter-spacing:.1px">03.06.2010</div>
<div class="t" style="left:658px;top:311.1px;width:54px;text-align:center;font-size:4.4px;font-weight:700;color:#000">7215</div>
<div class="a" style="left:537px;top:317px;width:59px;height:6px;background:#92d050"></div>
<div class="a" style="left:597px;top:317px;width:60px;height:6px;background:#fff"></div>
<div class="a" style="left:658px;top:317px;width:54px;height:6px;background:#fff"></div>
<div class="t" style="left:537.3px;top:318.1px;font-size:4.4px;font-weight:700;color:#000">Мясо</div>
<div class="t" style="left:597px;top:318.1px;width:60px;text-align:center;font-size:4.4px;font-weight:700;color:#000;letter-spacing:.1px">04.06.2010</div>
<div class="t" style="left:658px;top:318.1px;width:54px;text-align:center;font-size:4.4px;font-weight:700;color:#000">21890</div>
<div class="a" style="left:537px;top:324px;width:59px;height:6px;background:#92d050"></div>
<div class="a" style="left:597px;top:324px;width:60px;height:6px;background:#fff"></div>
<div class="a" style="left:658px;top:324px;width:54px;height:6px;background:#fff"></div>
<div class="t" style="left:537.3px;top:325.1px;font-size:4.4px;font-weight:700;color:#000">Рыба</div>
<div class="t" style="left:597px;top:325.1px;width:60px;text-align:center;font-size:4.4px;font-weight:700;color:#000;letter-spacing:.1px">05.06.2010</div>
<div class="t" style="left:658px;top:325.1px;width:54px;text-align:center;font-size:4.4px;font-weight:700;color:#000">20721</div>
<div class="a" style="left:537px;top:331px;width:59px;height:5px;background:#92d050"></div>
<div class="a" style="left:597px;top:331px;width:60px;height:5px;background:#fff"></div>
<div class="a" style="left:658px;top:331px;width:54px;height:5px;background:#fff"></div>
<div class="t" style="left:537.3px;top:332.1px;font-size:4.4px;font-weight:700;color:#000">Рыба</div>
<div class="t" style="left:597px;top:332.1px;width:60px;text-align:center;font-size:4.4px;font-weight:700;color:#000;letter-spacing:.1px">30.05.2010</div>
<div class="t" style="left:658px;top:332.1px;width:54px;text-align:center;font-size:4.4px;font-weight:700;color:#000">14687</div>
<div class="a" style="left:537px;top:337px;width:59px;height:6px;background:#92d050"></div>
<div class="a" style="left:597px;top:337px;width:60px;height:6px;background:#fff"></div>
<div class="a" style="left:658px;top:337px;width:54px;height:6px;background:#fff"></div>
<div class="t" style="left:537.3px;top:338.1px;font-size:4.4px;font-weight:700;color:#000">Рыба</div>
<div class="t" style="left:597px;top:338.1px;width:60px;text-align:center;font-size:4.4px;font-weight:700;color:#000;letter-spacing:.1px">31.05.2010</div>
<div class="t" style="left:658px;top:338.1px;width:54px;text-align:center;font-size:4.4px;font-weight:700;color:#000">11249</div>
<div class="a" style="left:537px;top:344px;width:59px;height:6px;background:#92d050"></div>
<div class="a" style="left:597px;top:344px;width:60px;height:6px;background:#fff"></div>
<div class="a" style="left:658px;top:344px;width:54px;height:6px;background:#fff"></div>
<div class="t" style="left:537.3px;top:345.1px;font-size:4.4px;font-weight:700;color:#000">Рыба</div>
<div class="t" style="left:597px;top:345.1px;width:60px;text-align:center;font-size:4.4px;font-weight:700;color:#000;letter-spacing:.1px">01.06.2010</div>
<div class="t" style="left:658px;top:345.1px;width:54px;text-align:center;font-size:4.4px;font-weight:700;color:#000">16024</div>
<div class="a" style="left:537px;top:351px;width:59px;height:6px;background:#92d050"></div>
<div class="a" style="left:597px;top:351px;width:60px;height:6px;background:#fff"></div>
<div class="a" style="left:658px;top:351px;width:54px;height:6px;background:#fff"></div>
<div class="t" style="left:537.3px;top:352.1px;font-size:4.4px;font-weight:700;color:#000">Рыба</div>
<div class="t" style="left:597px;top:352.1px;width:60px;text-align:center;font-size:4.4px;font-weight:700;color:#000;letter-spacing:.1px">02.06.2010</div>
<div class="t" style="left:658px;top:352.1px;width:54px;text-align:center;font-size:4.4px;font-weight:700;color:#000">10839</div>
<div class="a" style="left:537px;top:358px;width:59px;height:5px;background:#92d050"></div>
<div class="a" style="left:597px;top:358px;width:60px;height:5px;background:#fff"></div>
<div class="a" style="left:658px;top:358px;width:54px;height:5px;background:#fff"></div>
<div class="t" style="left:537.3px;top:359.1px;font-size:4.4px;font-weight:700;color:#000">Рыба</div>
<div class="t" style="left:597px;top:359.1px;width:60px;text-align:center;font-size:4.4px;font-weight:700;color:#000;letter-spacing:.1px">03.06.2010</div>
<div class="t" style="left:658px;top:359.1px;width:54px;text-align:center;font-size:4.4px;font-weight:700;color:#000">10141</div>
<div class="a" style="left:537px;top:364px;width:59px;height:6px;background:#92d050"></div>
<div class="a" style="left:597px;top:364px;width:60px;height:6px;background:#fff"></div>
<div class="a" style="left:658px;top:364px;width:54px;height:6px;background:#fff"></div>
<div class="t" style="left:537.3px;top:365.1px;font-size:4.4px;font-weight:700;color:#000">Сахар</div>
<div class="t" style="left:597px;top:365.1px;width:60px;text-align:center;font-size:4.4px;font-weight:700;color:#000;letter-spacing:.1px">04.06.2010</div>
<div class="t" style="left:658px;top:365.1px;width:54px;text-align:center;font-size:4.4px;font-weight:700;color:#000">18749</div>
<div class="a" style="left:537px;top:371px;width:59px;height:6px;background:#92d050"></div>
<div class="a" style="left:597px;top:371px;width:60px;height:6px;background:#fff"></div>
<div class="a" style="left:658px;top:371px;width:54px;height:6px;background:#fff"></div>
<div class="t" style="left:537.3px;top:372.1px;font-size:4.4px;font-weight:700;color:#000">Сахар</div>
<div class="t" style="left:597px;top:372.1px;width:60px;text-align:center;font-size:4.4px;font-weight:700;color:#000;letter-spacing:.1px">05.06.2010</div>
<div class="t" style="left:658px;top:372.1px;width:54px;text-align:center;font-size:4.4px;font-weight:700;color:#000">14704</div>
<div class="a" style="left:537px;top:378px;width:59px;height:6px;background:#92d050"></div>
<div class="a" style="left:597px;top:378px;width:60px;height:6px;background:#fff"></div>
<div class="a" style="left:658px;top:378px;width:54px;height:6px;background:#fff"></div>
<div class="t" style="left:537.3px;top:379.1px;font-size:4.4px;font-weight:700;color:#000">Сахар</div>
<div class="t" style="left:597px;top:379.1px;width:60px;text-align:center;font-size:4.4px;font-weight:700;color:#000;letter-spacing:.1px">30.05.2010</div>
<div class="t" style="left:658px;top:379.1px;width:54px;text-align:center;font-size:4.4px;font-weight:700;color:#000">15863</div>
<div class="a" style="left:537px;top:385px;width:59px;height:6px;background:#92d050"></div>
<div class="a" style="left:597px;top:385px;width:60px;height:6px;background:#fff"></div>
<div class="a" style="left:658px;top:385px;width:54px;height:6px;background:#fff"></div>
<div class="t" style="left:537.3px;top:386.1px;font-size:4.4px;font-weight:700;color:#000">Сахар</div>
<div class="t" style="left:597px;top:386.1px;width:60px;text-align:center;font-size:4.4px;font-weight:700;color:#000;letter-spacing:.1px">31.05.2010</div>
<div class="t" style="left:658px;top:386.1px;width:54px;text-align:center;font-size:4.4px;font-weight:700;color:#000">20704</div>
<div class="a" style="left:537px;top:392px;width:59px;height:5px;background:#92d050"></div>
<div class="a" style="left:597px;top:392px;width:60px;height:5px;background:#fff"></div>
<div class="a" style="left:658px;top:392px;width:54px;height:5px;background:#fff"></div>
<div class="t" style="left:537.3px;top:393.1px;font-size:4.4px;font-weight:700;color:#000">Сахар</div>
<div class="t" style="left:597px;top:393.1px;width:60px;text-align:center;font-size:4.4px;font-weight:700;color:#000;letter-spacing:.1px">01.06.2010</div>
<div class="t" style="left:658px;top:393.1px;width:54px;text-align:center;font-size:4.4px;font-weight:700;color:#000">16005</div>
<div class="a" style="left:537px;top:398px;width:59px;height:6px;background:#92d050"></div>
<div class="a" style="left:597px;top:398px;width:60px;height:6px;background:#fff"></div>
<div class="a" style="left:658px;top:398px;width:54px;height:6px;background:#fff"></div>
<div class="t" style="left:537.3px;top:399.1px;font-size:4.4px;font-weight:700;color:#000">Сахар</div>
<div class="t" style="left:597px;top:399.1px;width:60px;text-align:center;font-size:4.4px;font-weight:700;color:#000;letter-spacing:.1px">02.06.2010</div>
<div class="t" style="left:658px;top:399.1px;width:54px;text-align:center;font-size:4.4px;font-weight:700;color:#000">14804</div>
<div class="a" style="left:537px;top:405px;width:59px;height:6px;background:#92d050"></div>
<div class="a" style="left:597px;top:405px;width:60px;height:6px;background:#fff"></div>
<div class="a" style="left:658px;top:405px;width:54px;height:6px;background:#fff"></div>
<div class="t" style="left:537.3px;top:406.1px;font-size:4.4px;font-weight:700;color:#000">Чай</div>
<div class="t" style="left:597px;top:406.1px;width:60px;text-align:center;font-size:4.4px;font-weight:700;color:#000;letter-spacing:.1px">03.06.2010</div>
<div class="t" style="left:658px;top:406.1px;width:54px;text-align:center;font-size:4.4px;font-weight:700;color:#000">13506</div>
<div class="a" style="left:537px;top:412px;width:59px;height:6px;background:#92d050"></div>
<div class="a" style="left:597px;top:412px;width:60px;height:6px;background:#fff"></div>
<div class="a" style="left:658px;top:412px;width:54px;height:6px;background:#fff"></div>
<div class="t" style="left:537.3px;top:413.1px;font-size:4.4px;font-weight:700;color:#000">Чай</div>
<div class="t" style="left:597px;top:413.1px;width:60px;text-align:center;font-size:4.4px;font-weight:700;color:#000;letter-spacing:.1px">04.06.2010</div>
<div class="t" style="left:658px;top:413.1px;width:54px;text-align:center;font-size:4.4px;font-weight:700;color:#000">17470</div>
<div class="a" style="left:537px;top:419px;width:59px;height:5px;background:#92d050"></div>
<div class="a" style="left:597px;top:419px;width:60px;height:5px;background:#fff"></div>
<div class="a" style="left:658px;top:419px;width:54px;height:5px;background:#fff"></div>
<div class="t" style="left:537.3px;top:420.1px;font-size:4.4px;font-weight:700;color:#000">Чай</div>
<div class="t" style="left:597px;top:420.1px;width:60px;text-align:center;font-size:4.4px;font-weight:700;color:#000;letter-spacing:.1px">05.06.2010</div>
<div class="t" style="left:658px;top:420.1px;width:54px;text-align:center;font-size:4.4px;font-weight:700;color:#000">21106</div>
<div class="a" style="left:537px;top:425px;width:59px;height:6px;background:#92d050"></div>
<div class="a" style="left:597px;top:425px;width:60px;height:6px;background:#fff"></div>
<div class="a" style="left:658px;top:425px;width:54px;height:6px;background:#fff"></div>
<div class="t" style="left:537.3px;top:426.1px;font-size:4.4px;font-weight:700;color:#000">Картофель</div>
<div class="t" style="left:597px;top:426.1px;width:60px;text-align:center;font-size:4.4px;font-weight:700;color:#000;letter-spacing:.1px">30.05.2010</div>
<div class="t" style="left:658px;top:426.1px;width:54px;text-align:center;font-size:4.4px;font-weight:700;color:#000">9467</div>
<div class="a" style="left:537px;top:432px;width:59px;height:6px;background:#92d050"></div>
<div class="a" style="left:597px;top:432px;width:60px;height:6px;background:#fff"></div>
<div class="a" style="left:658px;top:432px;width:54px;height:6px;background:#fff"></div>
<div class="t" style="left:537.3px;top:433.1px;font-size:4.4px;font-weight:700;color:#000">Картофель</div>
<div class="t" style="left:597px;top:433.1px;width:60px;text-align:center;font-size:4.4px;font-weight:700;color:#000;letter-spacing:.1px">31.05.2010</div>
<div class="t" style="left:658px;top:433.1px;width:54px;text-align:center;font-size:4.4px;font-weight:700;color:#000">10799</div>
<div class="a" style="left:537px;top:439px;width:59px;height:6px;background:#92d050"></div>
<div class="a" style="left:597px;top:439px;width:60px;height:6px;background:#fff"></div>
<div class="a" style="left:658px;top:439px;width:54px;height:6px;background:#fff"></div>
<div class="t" style="left:537.3px;top:440.1px;font-size:4.4px;font-weight:700;color:#000">Картофель</div>
<div class="t" style="left:597px;top:440.1px;width:60px;text-align:center;font-size:4.4px;font-weight:700;color:#000;letter-spacing:.1px">01.06.2010</div>
<div class="t" style="left:658px;top:440.1px;width:54px;text-align:center;font-size:4.4px;font-weight:700;color:#000">17401</div>
<div class="a" style="left:537px;top:446px;width:59px;height:6px;background:#92d050"></div>
<div class="a" style="left:597px;top:446px;width:60px;height:6px;background:#fff"></div>
<div class="a" style="left:658px;top:446px;width:54px;height:6px;background:#fff"></div>
<div class="t" style="left:537.3px;top:447.1px;font-size:4.4px;font-weight:700;color:#000">Картофель</div>
<div class="t" style="left:597px;top:447.1px;width:60px;text-align:center;font-size:4.4px;font-weight:700;color:#000;letter-spacing:.1px">02.06.2010</div>
<div class="t" style="left:658px;top:447.1px;width:54px;text-align:center;font-size:4.4px;font-weight:700;color:#000">9484</div>
<div class="a" style="left:537px;top:453px;width:59px;height:5px;background:#92d050"></div>
<div class="a" style="left:597px;top:453px;width:60px;height:5px;background:#fff"></div>
<div class="a" style="left:658px;top:453px;width:54px;height:5px;background:#fff"></div>
<div class="t" style="left:537.3px;top:454.1px;font-size:4.4px;font-weight:700;color:#000">Картофель</div>
<div class="t" style="left:597px;top:454.1px;width:60px;text-align:center;font-size:4.4px;font-weight:700;color:#000;letter-spacing:.1px">03.06.2010</div>
<div class="t" style="left:658px;top:454.1px;width:54px;text-align:center;font-size:4.4px;font-weight:700;color:#000">21222</div>
<div class="a" style="left:537px;top:459px;width:59px;height:6px;background:#92d050"></div>
<div class="a" style="left:597px;top:459px;width:60px;height:6px;background:#fff"></div>
<div class="a" style="left:658px;top:459px;width:54px;height:6px;background:#fff"></div>
<div class="t" style="left:537.3px;top:460.1px;font-size:4.4px;font-weight:700;color:#000">Картофель</div>
<div class="t" style="left:597px;top:460.1px;width:60px;text-align:center;font-size:4.4px;font-weight:700;color:#000;letter-spacing:.1px">04.06.2010</div>
<div class="t" style="left:658px;top:460.1px;width:54px;text-align:center;font-size:4.4px;font-weight:700;color:#000">15571</div>
<div class="a" style="left:537px;top:466px;width:59px;height:6px;background:#92d050"></div>
<div class="a" style="left:597px;top:466px;width:60px;height:6px;background:#fff"></div>
<div class="a" style="left:658px;top:466px;width:54px;height:6px;background:#fff"></div>
<div class="t" style="left:537.3px;top:467.1px;font-size:4.4px;font-weight:700;color:#000">Мясо</div>
<div class="t" style="left:597px;top:467.1px;width:60px;text-align:center;font-size:4.4px;font-weight:700;color:#000;letter-spacing:.1px">05.06.2010</div>
<div class="t" style="left:658px;top:467.1px;width:54px;text-align:center;font-size:4.4px;font-weight:700;color:#000">13388</div>
<div class="a" style="left:537px;top:473px;width:59px;height:6px;background:#92d050"></div>
<div class="a" style="left:597px;top:473px;width:60px;height:6px;background:#fff"></div>
<div class="a" style="left:658px;top:473px;width:54px;height:6px;background:#fff"></div>
<div class="t" style="left:537.3px;top:474.1px;font-size:4.4px;font-weight:700;color:#000">Мясо</div>
<div class="t" style="left:597px;top:474.1px;width:60px;text-align:center;font-size:4.4px;font-weight:700;color:#000;letter-spacing:.1px">30.05.2010</div>
<div class="t" style="left:658px;top:474.1px;width:54px;text-align:center;font-size:4.4px;font-weight:700;color:#000">19144</div>
<div class="a" style="left:537px;top:480px;width:59px;height:5px;background:#92d050"></div>
<div class="a" style="left:597px;top:480px;width:60px;height:5px;background:#fff"></div>
<div class="a" style="left:658px;top:480px;width:54px;height:5px;background:#fff"></div>
<div class="t" style="left:537.3px;top:481.1px;font-size:4.4px;font-weight:700;color:#000">Мясо</div>
<div class="t" style="left:597px;top:481.1px;width:60px;text-align:center;font-size:4.4px;font-weight:700;color:#000;letter-spacing:.1px">31.05.2010</div>
<div class="t" style="left:658px;top:481.1px;width:54px;text-align:center;font-size:4.4px;font-weight:700;color:#000">7248</div>
<div class="a" style="left:537px;top:486px;width:59px;height:6px;background:#92d050"></div>
<div class="a" style="left:597px;top:486px;width:60px;height:6px;background:#fff"></div>
<div class="a" style="left:658px;top:486px;width:54px;height:6px;background:#fff"></div>
<div class="t" style="left:537.3px;top:487.1px;font-size:4.4px;font-weight:700;color:#000">Мясо</div>
<div class="t" style="left:597px;top:487.1px;width:60px;text-align:center;font-size:4.4px;font-weight:700;color:#000;letter-spacing:.1px">01.06.2010</div>
<div class="t" style="left:658px;top:487.1px;width:54px;text-align:center;font-size:4.4px;font-weight:700;color:#000">18000</div>
<div class="a" style="left:537px;top:493px;width:59px;height:6px;background:#92d050"></div>
<div class="a" style="left:597px;top:493px;width:60px;height:6px;background:#fff"></div>
<div class="a" style="left:658px;top:493px;width:54px;height:6px;background:#fff"></div>
<div class="t" style="left:537.3px;top:494.1px;font-size:4.4px;font-weight:700;color:#000">Мясо</div>
<div class="t" style="left:597px;top:494.1px;width:60px;text-align:center;font-size:4.4px;font-weight:700;color:#000;letter-spacing:.1px">02.06.2010</div>
<div class="t" style="left:658px;top:494.1px;width:54px;text-align:center;font-size:4.4px;font-weight:700;color:#000">19734</div>
<div class="a" style="left:537px;top:500px;width:59px;height:6px;background:#92d050"></div>
<div class="a" style="left:597px;top:500px;width:60px;height:6px;background:#fff"></div>
<div class="a" style="left:658px;top:500px;width:54px;height:6px;background:#fff"></div>
<div class="t" style="left:537.3px;top:501.1px;font-size:4.4px;font-weight:700;color:#000">Мясо</div>
<div class="t" style="left:597px;top:501.1px;width:60px;text-align:center;font-size:4.4px;font-weight:700;color:#000;letter-spacing:.1px">03.06.2010</div>
<div class="t" style="left:658px;top:501.1px;width:54px;text-align:center;font-size:4.4px;font-weight:700;color:#000">8049</div>
<div class="a" style="left:537px;top:507px;width:59px;height:6px;background:#92d050"></div>
<div class="a" style="left:597px;top:507px;width:60px;height:6px;background:#fff"></div>
<div class="a" style="left:658px;top:507px;width:54px;height:6px;background:#fff"></div>
<div class="t" style="left:537.3px;top:508.1px;font-size:4.4px;font-weight:700;color:#000">Мясо</div>
<div class="t" style="left:597px;top:508.1px;width:60px;text-align:center;font-size:4.4px;font-weight:700;color:#000;letter-spacing:.1px">04.06.2010</div>
<div class="t" style="left:658px;top:508.1px;width:54px;text-align:center;font-size:4.4px;font-weight:700;color:#000">9611</div>
<div class="a" style="left:537px;top:514px;width:59px;height:5px;background:#92d050"></div>
<div class="a" style="left:597px;top:514px;width:60px;height:5px;background:#fff"></div>
<div class="a" style="left:658px;top:514px;width:54px;height:5px;background:#fff"></div>
<div class="t" style="left:537.3px;top:515.1px;font-size:4.4px;font-weight:700;color:#000">Рыба</div>
<div class="t" style="left:597px;top:515.1px;width:60px;text-align:center;font-size:4.4px;font-weight:700;color:#000;letter-spacing:.1px">05.06.2010</div>
<div class="t" style="left:658px;top:515.1px;width:54px;text-align:center;font-size:4.4px;font-weight:700;color:#000">19422</div>
<div class="a" style="left:537px;top:520px;width:59px;height:6px;background:#92d050"></div>
<div class="a" style="left:597px;top:520px;width:60px;height:6px;background:#fff"></div>
<div class="a" style="left:658px;top:520px;width:54px;height:6px;background:#fff"></div>
<div class="t" style="left:537.3px;top:521.1px;font-size:4.4px;font-weight:700;color:#000">Рыба</div>
<div class="t" style="left:597px;top:521.1px;width:60px;text-align:center;font-size:4.4px;font-weight:700;color:#000;letter-spacing:.1px">30.05.2010</div>
<div class="t" style="left:658px;top:521.1px;width:54px;text-align:center;font-size:4.4px;font-weight:700;color:#000">16684</div>
<div class="a" style="left:537px;top:527px;width:59px;height:6px;background:#92d050"></div>
<div class="a" style="left:597px;top:527px;width:60px;height:6px;background:#fff"></div>
<div class="a" style="left:658px;top:527px;width:54px;height:6px;background:#fff"></div>
<div class="t" style="left:537.3px;top:528.1px;font-size:4.4px;font-weight:700;color:#000">Рыба</div>
<div class="t" style="left:597px;top:528.1px;width:60px;text-align:center;font-size:4.4px;font-weight:700;color:#000;letter-spacing:.1px">31.05.2010</div>
<div class="t" style="left:658px;top:528.1px;width:54px;text-align:center;font-size:4.4px;font-weight:700;color:#000">7701</div>
<div class="a" style="left:537px;top:534px;width:59px;height:6px;background:#92d050"></div>
<div class="a" style="left:597px;top:534px;width:60px;height:6px;background:#fff"></div>
<div class="a" style="left:658px;top:534px;width:54px;height:6px;background:#fff"></div>
<div class="t" style="left:537.3px;top:535.1px;font-size:4.4px;font-weight:700;color:#000">Рыба</div>
<div class="t" style="left:597px;top:535.1px;width:60px;text-align:center;font-size:4.4px;font-weight:700;color:#000;letter-spacing:.1px">01.06.2010</div>
<div class="t" style="left:658px;top:535.1px;width:54px;text-align:center;font-size:4.4px;font-weight:700;color:#000">11935</div>
<div class="a" style="left:537px;top:541px;width:59px;height:5px;background:#92d050"></div>
<div class="a" style="left:597px;top:541px;width:60px;height:5px;background:#fff"></div>
<div class="a" style="left:658px;top:541px;width:54px;height:5px;background:#fff"></div>
<div class="t" style="left:537.3px;top:542.1px;font-size:4.4px;font-weight:700;color:#000">Рыба</div>
<div class="t" style="left:597px;top:542.1px;width:60px;text-align:center;font-size:4.4px;font-weight:700;color:#000;letter-spacing:.1px">02.06.2010</div>
<div class="t" style="left:658px;top:542.1px;width:54px;text-align:center;font-size:4.4px;font-weight:700;color:#000">19780</div>
<div class="a" style="left:537px;top:547px;width:59px;height:6px;background:#92d050"></div>
<div class="a" style="left:597px;top:547px;width:60px;height:6px;background:#fff"></div>
<div class="a" style="left:658px;top:547px;width:54px;height:6px;background:#fff"></div>
<div class="t" style="left:537.3px;top:548.1px;font-size:4.4px;font-weight:700;color:#000">Рыба</div>
<div class="t" style="left:597px;top:548.1px;width:60px;text-align:center;font-size:4.4px;font-weight:700;color:#000;letter-spacing:.1px">03.06.2010</div>
<div class="t" style="left:658px;top:548.1px;width:54px;text-align:center;font-size:4.4px;font-weight:700;color:#000">7508</div>
<div class="a" style="left:537px;top:554px;width:59px;height:6px;background:#92d050"></div>
<div class="a" style="left:597px;top:554px;width:60px;height:6px;background:#fff"></div>
<div class="a" style="left:658px;top:554px;width:54px;height:6px;background:#fff"></div>
<div class="t" style="left:537.3px;top:555.1px;font-size:4.4px;font-weight:700;color:#000">Сахар</div>
<div class="t" style="left:597px;top:555.1px;width:60px;text-align:center;font-size:4.4px;font-weight:700;color:#000;letter-spacing:.1px">04.06.2010</div>
<div class="t" style="left:658px;top:555.1px;width:54px;text-align:center;font-size:4.4px;font-weight:700;color:#000">20493</div>
<div class="a" style="left:537px;top:561px;width:59px;height:6px;background:#92d050"></div>
<div class="a" style="left:597px;top:561px;width:60px;height:6px;background:#fff"></div>
<div class="a" style="left:658px;top:561px;width:54px;height:6px;background:#fff"></div>
<div class="t" style="left:537.3px;top:562.1px;font-size:4.4px;font-weight:700;color:#000">Сахар</div>
<div class="t" style="left:597px;top:562.1px;width:60px;text-align:center;font-size:4.4px;font-weight:700;color:#000;letter-spacing:.1px">05.06.2010</div>
<div class="t" style="left:658px;top:562.1px;width:54px;text-align:center;font-size:4.4px;font-weight:700;color:#000">21180</div>
<div class="a" style="left:514px;top:703px;border-top:4px solid transparent;border-bottom:4px solid transparent;border-right:6px solid #a8b0b4;width:0;height:0"></div>
<div class="a" style="left:529px;top:697px;width:28px;height:22px;border:1px solid #c6cacf;border-radius:3px;background:#fff"></div>
<div class="t" style="left:533.00px;top:702.34px;font-size:12px;font-weight:400;color:#222;">1</div>
<div class="t" style="left:559.00px;top:702.34px;font-size:12px;font-weight:400;color:#222;letter-spacing:-0.5px">из 5</div>
<div class="a" style="left:588px;top:703px;border-top:4px solid transparent;border-bottom:4px solid transparent;border-left:6px solid #505a64;width:0;height:0"></div>
<svg class="a" style="left:780px;top:699px" width="15" height="17">
<rect x="1.5" y="1.5" width="12" height="14" fill="#fff" stroke="#9aa0a8"/>
<path d="M4.5 2 V15 M10.5 2 V15 M2 4.5 H13 M2 12.5 H13" stroke="#b8c4d4"/></svg>
<div class="a" style="left:799px;top:697px;width:23px;height:22px;border:1.5px solid #e49a4e;border-radius:4px;background:#f6d2a4"></div>
<svg class="a" style="left:801px;top:699px" width="19" height="18">
<rect x="1.5" y="1.5" width="16" height="15" fill="#c9d2dc" stroke="#8a94a4"/>
<rect x="5.5" y="4.5" width="8" height="9" fill="#fff" stroke="#6a7484"/>
<path d="M7 6.5 H12 M7 9 H12 M7 11.5 H12" stroke="#8aa0c0"/>
<path d="M9.5 1.5 L11.5 3.5 L7.5 3.5 Z M9.5 16.5 L11.5 14.5 L7.5 14.5 Z M1.5 9 L3.5 7 L3.5 11 Z M17.5 9 L15.5 7 L15.5 11 Z" fill="#2a3a54"/></svg>

</body></html>
